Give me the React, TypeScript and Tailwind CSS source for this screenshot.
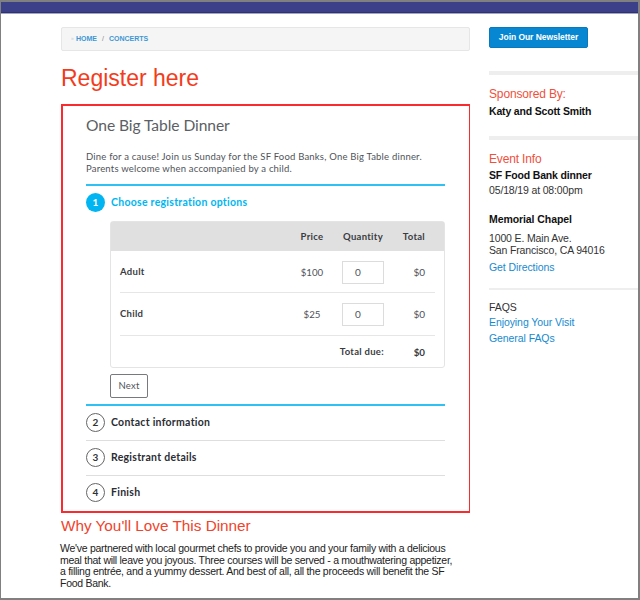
import type { ReactNode } from 'react';

interface Option {
  name: string;
  price: string;
}

const options: Option[] = [
  { name: 'Adult', price: '$100' },
  { name: 'Child', price: '$25' },
];

function Step({ number, title, active }: { number: number; title: string; active?: boolean }) {
  return (
    <div className="flex h-[34px] items-center gap-[6px]">
      <span
        className={`-mt-[2px] flex h-[19px] w-[19px] items-center justify-center rounded-full text-[10px] font-bold ${
          active ? 'bg-[#00b5f1] text-white' : 'border border-[#666] text-[#333]'
        }`}
      >
        {number}
      </span>
      <span
        className={`text-[10.5px] font-bold tracking-[0.27px] whitespace-nowrap ${
          active ? 'text-[#00b5f1]' : 'text-[#2b2d33]'
        }`}
      >
        {title}
      </span>
    </div>
  );
}

function RegistrationForm() {
  return (
    <section className="mt-[12px] h-[409px] border-2 border-r-[1.5px] border-[#fb2a2e] pt-[9px] pr-[24px] pl-[23px] font-['Lato',sans-serif] text-[#50535a]">
      <h2 className="h-[20px] text-[15.6px] leading-[21px] tracking-[-0.07px] whitespace-nowrap text-[#5c5f65]">
        One Big Table Dinner
      </h2>
      <p className="mt-[16px] h-[33px] text-[9.5px] leading-[12.4px] tracking-[0.2px] whitespace-nowrap">
        Dine for a cause! Join us Sunday for the SF Food Banks, One Big Table dinner.
        <br />
        Parents welcome when accompanied by a child.
      </p>

      <div className="h-[2px] bg-[#2fc1f3]" />
      <Step number={1} title="Choose registration options" active />

      <div className="mt-[1px] ml-[24px] h-[147px] rounded-[3px] border border-[#e4e4e4] text-[9.5px]">
        <div className="flex h-[29px] items-center bg-[#e0e0e0] pt-[2px] pr-[19px] font-bold tracking-[0.3px] text-[#3a3c42]">
          <span className="ml-[180px] w-[42px] text-center">Price</span>
          <span className="ml-[8px] w-[44px] text-center">Quantity</span>
          <span className="ml-auto">Total</span>
        </div>
        {options.map((o) => (
          <div key={o.name} className="mx-[9px] flex h-[42.3px] items-center border-b border-[#e6e6e6] pt-[1px] pr-[10px]">
            <span className="w-[171px] font-bold tracking-[0.3px] text-[#3a3c42]">{o.name}</span>
            <span className="w-[42px] text-center text-[9.7px]">{o.price}</span>
            <span className="ml-[9px] flex h-[23px] w-[42px] items-center border border-[#dcdcdc] pl-[12px] text-[10px]">
              0
            </span>
            <span className="ml-auto text-[10px]">$0</span>
          </div>
        ))}
        <div className="flex h-[33px] items-center pr-[19px] font-bold text-[#3a3c42]">
          <span className="w-[273px] text-right tracking-[0.3px]">Total due:</span>
          <span className="ml-auto text-[9.8px]">$0</span>
        </div>
      </div>

      <button className="mt-[6px] ml-[24px] block h-[24px] w-[38px] rounded-[2px] border border-[#77797d] text-[9.5px] tracking-[0.2px]">
        Next
      </button>

      <div className="mt-[6px] h-[2px] bg-[#2fc1f3]" />
      <Step number={2} title="Contact information" />
      <div className="h-[1px] bg-[#dedede]" />
      <Step number={3} title="Registrant details" />
      <div className="h-[1px] bg-[#dedede]" />
      <Step number={4} title="Finish" />
    </section>
  );
}

function SideHeading({ children }: { children: ReactNode }) {
  return <h3 className="h-[16px] text-[12px] leading-[15px] tracking-[-0.15px] text-[#f0503c]">{children}</h3>;
}

function Sidebar() {
  return (
    <aside className="flex-1 pt-[14px] text-[10.5px] leading-[12px] tracking-[-0.15px] whitespace-nowrap text-[#333]">
      <button className="block h-[21px] w-[99px] rounded-[2px] border border-[#0a78bd] bg-[#0787d2] text-[8.5px] leading-[19px] font-bold tracking-[-0.05px] text-white">
        Join Our Newsletter
      </button>

      <div className="mt-[23px] h-[4px] bg-[#eee]" />
      <div className="h-[61px] pt-[12px]">
        <SideHeading>Sponsored By:</SideHeading>
        <p className="mt-[2px] font-bold tracking-[-0.17px] text-[#111]">Katy and Scott Smith</p>
      </div>

      <div className="h-[4px] bg-[#eee]" />
      <div className="h-[148px] pt-[12px]">
        <SideHeading>Event Info</SideHeading>
        <p className="mt-[1px] font-bold text-[#111]">SF Food Bank dinner</p>
        <p className="mt-[3px]">05/18/19 at 08:00pm</p>
        <p className="mt-[17px] font-bold tracking-[-0.08px] text-[#111]">Memorial Chapel</p>
        <p className="mt-[7px]">
          1000 E. Main Ave.
          <br />
          San Francisco, CA 94016
        </p>
        <a className="mt-[5px] block tracking-[-0.08px] text-[#168ad0]">Get Directions</a>
      </div>

      <div className="h-[2px] bg-[#eee]" />
      <div className="pt-[11px] tracking-[-0.08px]">
        <p>FAQS</p>
        <a className="mt-[3px] block text-[#168ad0]">Enjoying Your Visit</a>
        <a className="mt-[4px] block text-[#168ad0]">General FAQs</a>
      </div>
    </aside>
  );
}

export default function App() {
  return (
    <div className="h-[600px] w-[640px] overflow-hidden border-2 border-l-[1px] border-[#808080] bg-white font-['Liberation_Sans',sans-serif]">
      <div className="h-[11px] border-b border-[#2f326e] bg-[#3b4088]" />
      <div className="h-[1px] bg-[#a2a4c4]" />
      <div className="-mt-[1px] flex">
        <main className="mr-[19px] ml-[60px] w-[409px] pt-[14px]">
          <nav className="flex h-[24px] items-center rounded-[2px] border border-[#e6e6e6] bg-[#f5f5f5] pl-[9px] text-[7px] font-bold text-[#3c98d4]">
            <span className="w-[5px] text-[5px] text-[#ccd5e0]">»</span>
            <span>HOME</span>
            <span className="mx-[5px] font-normal text-[#888]">/</span>
            <span>CONCERTS</span>
          </nav>
          <h1 className="mt-[13px] h-[28px] text-[23px] leading-[28px] text-[#f23c1c]">Register here</h1>

          <RegistrationForm />

          <h2 className="mt-[3px] h-[20px] text-[15.3px] leading-[20px] text-[#f0432c]">Why You'll Love This Dinner</h2>
          <p className="mt-[7px] -ml-[1px] text-[10.5px] leading-[11.6px] tracking-[-0.27px] whitespace-nowrap text-[#222]">
            We've partnered with local gourmet chefs to provide you and your family with a delicious
            <br />
            meal that will leave you joyous. Three courses will be served - a mouthwatering appetizer,
            <br />
            a filling entrée, and a yummy dessert. And best of all, all the proceeds will benefit the SF
            <br />
            Food Bank.
          </p>
        </main>
        <Sidebar />
      </div>
    </div>
  );
}
